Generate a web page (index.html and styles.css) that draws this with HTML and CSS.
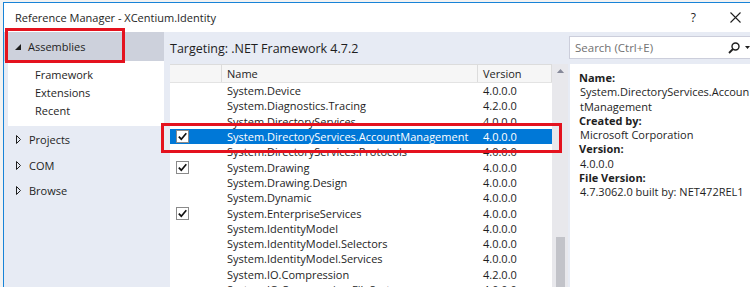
FILE: index.html
```html
<!DOCTYPE html>
<html>
<head>
<meta charset="utf-8">
<link rel="stylesheet" href="styles.css">
</head>
<body>
<div class="window">
  <div class="titlebar">
    <span class="title">Reference Manager - XCentium.Identity</span>
    <span class="help">?</span>
    <svg class="close" width="11" height="11" viewBox="0 0 11 11"><path d="M0.5 0.5 L10.5 10.5 M10.5 0.5 L0.5 10.5" stroke="#1e1e1e" stroke-width="1.1" fill="none"/></svg>
  </div>
  <div class="main">
    <nav class="nav">
      <div class="nav-sel">
        <svg class="tri-open" width="6" height="6" viewBox="0 0 6 6"><polygon points="0,6 6,6 6,0" fill="#1e1e1e"/></svg>
        <span>Assemblies</span>
      </div>
      <div class="nav-sub">
        <div class="sub-item">Framework</div>
        <div class="sub-item">Extensions</div>
        <div class="sub-item">Recent</div>
      </div>
      <div class="nav-item"><svg class="tri" width="5" height="9" viewBox="0 0 5 9"><polygon points="0.5,0.5 4.5,4.5 0.5,8.5" fill="none" stroke="#1e1e1e" stroke-width="1"/></svg><span>Projects</span></div>
      <div class="nav-item"><svg class="tri" width="5" height="9" viewBox="0 0 5 9"><polygon points="0.5,0.5 4.5,4.5 0.5,8.5" fill="none" stroke="#1e1e1e" stroke-width="1"/></svg><span>COM</span></div>
      <div class="nav-item"><svg class="tri" width="5" height="9" viewBox="0 0 5 9"><polygon points="0.5,0.5 4.5,4.5 0.5,8.5" fill="none" stroke="#1e1e1e" stroke-width="1"/></svg><span>Browse</span></div>
      <div class="hl-nav"></div>
    </nav>
    <section class="center">
      <div class="target">Targeting: .NET Framework 4.7.2</div>
      <div class="gridwrap">
        <div class="grid">
          <div class="ghead">
            <div class="c-chk hcell"></div>
            <div class="c-name hcell">Name</div>
            <div class="c-ver hcell">Version</div>
          </div>
          <div class="row"><div class="c-chk"></div><div class="c-name">System.Device</div><div class="c-ver">4.0.0.0</div></div>
          <div class="row"><div class="c-chk"></div><div class="c-name">System.Diagnostics.Tracing</div><div class="c-ver">4.2.0.0</div></div>
          <div class="row"><div class="c-chk"></div><div class="c-name">System.DirectoryServices</div><div class="c-ver">4.0.0.0</div></div>
          <div class="row sel"><div class="c-chk"><span class="cb"><svg width="11" height="11" viewBox="0 0 11 11"><path d="M1.8 5.6 L4.3 8.2 L9.3 2.3" stroke="#111" stroke-width="1.7" fill="none"/></svg></span></div><div class="c-name">System.DirectoryServices.AccountManagement</div><div class="c-ver">4.0.0.0</div></div>
          <div class="row"><div class="c-chk"></div><div class="c-name">System.DirectoryServices.Protocols</div><div class="c-ver">4.0.0.0</div></div>
          <div class="row"><div class="c-chk"><span class="cb"><svg width="11" height="11" viewBox="0 0 11 11"><path d="M1.8 5.6 L4.3 8.2 L9.3 2.3" stroke="#111" stroke-width="1.7" fill="none"/></svg></span></div><div class="c-name">System.Drawing</div><div class="c-ver">4.0.0.0</div></div>
          <div class="row"><div class="c-chk"></div><div class="c-name">System.Drawing.Design</div><div class="c-ver">4.0.0.0</div></div>
          <div class="row"><div class="c-chk"></div><div class="c-name">System.Dynamic</div><div class="c-ver">4.0.0.0</div></div>
          <div class="row"><div class="c-chk"><span class="cb"><svg width="11" height="11" viewBox="0 0 11 11"><path d="M1.8 5.6 L4.3 8.2 L9.3 2.3" stroke="#111" stroke-width="1.7" fill="none"/></svg></span></div><div class="c-name">System.EnterpriseServices</div><div class="c-ver">4.0.0.0</div></div>
          <div class="row"><div class="c-chk"></div><div class="c-name">System.IdentityModel</div><div class="c-ver">4.0.0.0</div></div>
          <div class="row"><div class="c-chk"></div><div class="c-name">System.IdentityModel.Selectors</div><div class="c-ver">4.0.0.0</div></div>
          <div class="row"><div class="c-chk"></div><div class="c-name">System.IdentityModel.Services</div><div class="c-ver">4.0.0.0</div></div>
          <div class="row"><div class="c-chk"></div><div class="c-name">System.IO.Compression</div><div class="c-ver">4.2.0.0</div></div>
          <div class="row"><div class="c-chk"></div><div class="c-name">System.IO.Compression.FileSystem</div><div class="c-ver">4.0.0.0</div></div>
        </div>
        <div class="scroll">
          <svg class="up" width="9" height="5" viewBox="0 0 9 5"><polygon points="0,5 4.5,0 9,5" fill="#868999"/></svg>
          <div class="thumb"></div>
        </div>
        <div class="hl-row"></div>
      </div>
    </section>
    <aside class="side">
      <div class="searchbar">
        <div class="search">
          <span class="ph">Search (Ctrl+E)</span>
          <svg class="mag" width="12" height="12" viewBox="0 0 12 12"><circle cx="7.5" cy="4.5" r="3.5" stroke="#1e1e1e" stroke-width="1.4" fill="none"/><path d="M5 7 L1 11" stroke="#1e1e1e" stroke-width="1.8"/></svg>
          <svg class="dd" width="5" height="3" viewBox="0 0 5 3"><polygon points="0,0 5,0 2.5,3" fill="#1e1e1e"/></svg>
        </div>
      </div>
      <div class="details">
        <div class="lbl">Name:</div>
        <div class="val">System.DirectoryServices.Accoun<br>tManagement</div>
        <div class="lbl">Created by:</div>
        <div class="val">Microsoft Corporation</div>
        <div class="lbl">Version:</div>
        <div class="val">4.0.0.0</div>
        <div class="lbl">File Version:</div>
        <div class="val">4.7.3062.0 built by: NET472REL1</div>
      </div>
    </aside>
  </div>
</div>
</body>
</html>
```
FILE: styles.css
```css
* { box-sizing: border-box; }
html, body {
  margin: 0;
  padding: 0;
  width: 750px;
  height: 287px;
  overflow: hidden;
  background: #f2f2f2;
}
body {
  font-family: "Open Sans", "Noto Sans", sans-serif;
  font-size: 11px;
  color: #1e1e1e;
}
.window {
  margin: 2px 0 0 3px;
  height: 285px;
  border-top: 1px solid #1883d7;
  border-left: 1px solid #1883d7;
  background: #fff;
  display: flex;
  flex-direction: column;
}
.titlebar {
  height: 29px;
  flex: none;
  display: flex;
  align-items: center;
  padding-left: 11px;
  padding-bottom: 1px;
  background: #fff;
  font-size: 11px;
}
.title { flex: 1; }
.help { margin-right: 34px; font-size: 12px; }
.close { margin-right: 9px; }
.main {
  flex: 1;
  display: flex;
  min-height: 0;
}
.nav {
  width: 160px;
  flex: none;
  background: #e7ebf4;
  position: relative;
  display: flex;
  flex-direction: column;
}
.nav-sel {
  height: 29px;
  background: #cdd1dc;
  display: flex;
  align-items: center;
  padding-left: 11px;
  gap: 7px;
  font-size: 11px;
}
.tri-open { margin-top: 1px; }
.nav-sub {
  margin-left: 4px;
  background: #fff;
  height: 65px;
  padding-top: 5px;
  padding-left: 27px;
  font-size: 11px;
}
.sub-item { height: 18px; line-height: 18px; }
.nav-item {
  height: 25.5px;
  display: flex;
  align-items: center;
  padding-left: 12px;
  gap: 8px;
  font-size: 11px;
}
.nav-sub + .nav-item { margin-top: 1px; }
.hl-nav {
  position: absolute;
  left: 1px;
  top: -4px;
  width: 120px;
  height: 35px;
  border: 3px solid #e4121e;
}
.center {
  width: 404px;
  flex: none;
  background: #e7ebf4;
  display: flex;
  flex-direction: column;
}
.target {
  height: 32px;
  flex: none;
  display: flex;
  align-items: center;
  padding-left: 6px;
  font-size: 12.5px;
}
.gridwrap {
  flex: 1;
  display: flex;
  padding-left: 6px;
  position: relative;
  min-height: 0;
}
.grid {
  width: 382px;
  background: #fff;
  overflow: hidden;
}
.ghead {
  height: 19px;
  display: flex;
  background: #f6f6f6;
  border-top: 1px solid #dcdcdc;
  border-bottom: 1px solid #e3e3e3;
}
.hcell {
  display: flex;
  align-items: center;
  border-right: 1px solid #dcdcdc;
}
.c-chk { width: 52px; flex: none; display: flex; align-items: center; padding-left: 6px; }
.c-name { width: 256px; flex: none; padding-left: 5px; white-space: nowrap; overflow: hidden; }
.c-ver { flex: 1; padding-left: 5px; white-space: nowrap; }
.row {
  height: 15.3px;
  display: flex;
  align-items: center;
  line-height: 15px;
}
.row.sel { background: #0078d7; color: #fff; }
.cb {
  width: 13px;
  height: 13px;
  border: 1px solid #8a8a8a;
  background: #fff;
  display: flex;
  align-items: center;
  justify-content: center;
}
.scroll {
  width: 16px;
  flex: none;
  background: #e8e8ec;
  display: flex;
  flex-direction: column;
  align-items: center;
  padding-top: 5px;
}
.thumb {
  width: 9px;
  height: 60px;
  margin-top: 164px;
  background: #c2c3c9;
}
.hl-row {
  position: absolute;
  left: -3px;
  top: 59px;
  width: 401px;
  height: 30px;
  border: 3px solid #e4121e;
}
.side {
  flex: 1;
  display: flex;
  flex-direction: column;
  min-width: 0;
}
.searchbar {
  height: 32px;
  flex: none;
  background: #e7ebf4;
  padding: 4px 0 4px 1px;
}
.search {
  height: 23px;
  background: #fff;
  border: 1px solid #cccedb;
  border-right: none;
  display: flex;
  align-items: center;
  padding-left: 5px;
}
.ph { flex: 1; color: #717171; font-size: 11.5px; }
.mag { margin-right: 5px; }
.details {
  flex: 1;
  background: #fff;
  padding: 7px 0 0 9px;
  line-height: 14.3px;
  font-size: 11px;
  border-left: 2px solid #e7ebf4;
}
.lbl { font-weight: bold; }
.val { padding-left: 1px; }
```
